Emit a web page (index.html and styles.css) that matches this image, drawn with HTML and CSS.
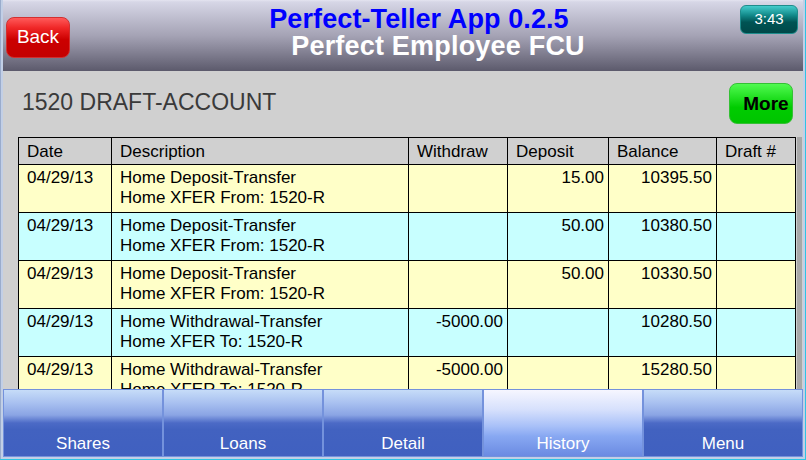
FILE: index.html
```html
<!DOCTYPE html>
<html>
<head>
<meta charset="utf-8">
<link rel="stylesheet" href="styles.css">
</head>
<body>
<div class="frame">
  <div class="window">
    <header class="header">
      <button class="back-btn">Back</button>
      <div class="titles">
        <div class="title-app">Perfect-Teller App 0.2.5</div>
        <div class="title-org">Perfect Employee FCU</div>
      </div>
      <div class="clock">3:43</div>
    </header>
    <main class="content">
      <div class="toolbar">
        <div class="acct-title">1520 DRAFT-ACCOUNT</div>
        <button class="more-btn">More</button>
      </div>
      <div class="table-area">
        <table class="history">
          <thead>
            <tr>
              <th class="c-date">Date</th>
              <th class="c-desc">Description</th>
              <th class="c-wd">Withdraw</th>
              <th class="c-dep">Deposit</th>
              <th class="c-bal">Balance</th>
              <th class="c-draft">Draft #</th>
            </tr>
          </thead>
          <tbody>
            <tr class="yellow">
              <td>04/29/13</td>
              <td>Home Deposit-Transfer<br>Home XFER From: 1520-R</td>
              <td class="num"></td>
              <td class="num">15.00</td>
              <td class="num">10395.50</td>
              <td></td>
            </tr>
            <tr class="cyan">
              <td>04/29/13</td>
              <td>Home Deposit-Transfer<br>Home XFER From: 1520-R</td>
              <td class="num"></td>
              <td class="num">50.00</td>
              <td class="num">10380.50</td>
              <td></td>
            </tr>
            <tr class="yellow">
              <td>04/29/13</td>
              <td>Home Deposit-Transfer<br>Home XFER From: 1520-R</td>
              <td class="num"></td>
              <td class="num">50.00</td>
              <td class="num">10330.50</td>
              <td></td>
            </tr>
            <tr class="cyan">
              <td>04/29/13</td>
              <td>Home Withdrawal-Transfer<br>Home XFER To: 1520-R</td>
              <td class="num">-5000.00</td>
              <td class="num"></td>
              <td class="num">10280.50</td>
              <td></td>
            </tr>
            <tr class="yellow">
              <td>04/29/13</td>
              <td>Home Withdrawal-Transfer<br>Home XFER To: 1520-R</td>
              <td class="num">-5000.00</td>
              <td class="num"></td>
              <td class="num">15280.50</td>
              <td></td>
            </tr>
          </tbody>
        </table>
        <div class="scrollbar"></div>
      </div>
    </main>
    <nav class="tabs">
      <div class="tab">Shares</div>
      <div class="tab">Loans</div>
      <div class="tab">Detail</div>
      <div class="tab active">History</div>
      <div class="tab">Menu</div>
    </nav>
  </div>
</div>
</body>
</html>
```
FILE: styles.css
```css
* { box-sizing: border-box; }
html, body {
  margin: 0;
  padding: 0;
  width: 806px;
  height: 460px;
  overflow: hidden;
  font-family: "Liberation Sans", Arial, sans-serif;
}
.frame {
  width: 806px;
  height: 460px;
  background: #c2cfe6;
  padding: 0 2px 2px 3px;
  border-right: 1px solid #2ec4e4;
  border-bottom: 1px solid #2ec4e4;
  box-shadow: inset 1px 0 0 #9aaccc;
}
.window {
  width: 800px;
  height: 457px;
  display: flex;
  flex-direction: column;
  background: #d0d0d0;
}
.header {
  height: 71px;
  flex: none;
  display: flex;
  align-items: flex-start;
  background: linear-gradient(to bottom, #e4e4f0 0px, #d6d6e6 2px, #a4a2b4 36px, #5c5a6c 71px);
}
.back-btn {
  margin: 17px 0 0 3px;
  width: 64px;
  height: 41px;
  border: 1px solid #d23030;
  border-radius: 8px;
  background: linear-gradient(to bottom, #ff5a5a 0%, #f02828 25%, #cc0000 55%, #c40000 100%);
  color: #fff;
  font-family: "Liberation Sans", Arial, sans-serif;
  font-size: 19px;
  padding: 0 0 2px 0;
  line-height: 20px;
}
.titles {
  flex: 1;
  padding-top: 6px;
  font-weight: bold;
  font-size: 27px;
  line-height: 27px;
  text-align: center;
  letter-spacing: 0.1px;
}
.title-app {
  color: #0000ff;
  padding-left: 28px;
}
.title-org {
  color: #ffffff;
  padding-left: 66px;
  letter-spacing: 0.2px;
}
.clock {
  margin: 5px 5px 0 0;
  width: 58px;
  height: 29px;
  border: 1px solid #1e8c8c;
  border-radius: 6px;
  background: linear-gradient(to bottom, #44cccc 0%, #118888 35%, #005454 60%, #004848 100%);
  color: #fff;
  font-size: 15px;
  line-height: 26px;
  text-align: center;
}
.content {
  flex: 1;
  min-height: 0;
  overflow: hidden;
  padding: 12px 0 0 15px;
  display: flex;
  flex-direction: column;
}
.toolbar {
  display: flex;
  align-items: flex-start;
  justify-content: space-between;
  height: 41px;
  margin-right: 10px;
  flex: none;
}
.acct-title {
  margin-top: 6px;
  margin-left: 4px;
  font-size: 23px;
  line-height: 26px;
  color: #3a3a3a;
}
.more-btn {
  width: 64px;
  height: 41px;
  border: 1px solid #34c034;
  border-radius: 8px;
  background: linear-gradient(to bottom, #50fa50 0%, #22e022 35%, #00cc00 60%, #00c400 100%);
  color: #000;
  font-family: "Liberation Sans", Arial, sans-serif;
  font-weight: bold;
  font-size: 19px;
  padding: 0 0 0 10px;
  line-height: 20px;
}
.table-area {
  margin-top: 13px;
  display: flex;
  align-items: stretch;
  flex: 1;
  min-height: 0;
}
.history {
  border-collapse: separate;
  border-spacing: 0;
  table-layout: fixed;
  width: 778px;
  border-left: 1px solid #000;
  border-top: 1px solid #000;
  font-size: 17px;
  line-height: 20px;
  color: #000;
  align-self: flex-start;
}
.history th, .history td {
  border-right: 1px solid #000;
  border-bottom: 1px solid #000;
  padding: 3px 4px 3px 8px;
  text-align: left;
  vertical-align: top;
  font-weight: normal;
  white-space: nowrap;
  overflow: hidden;
}
.history th { padding-top: 4px; padding-bottom: 2px; background: #d0d0d0; }
.history td { padding-bottom: 4px; }
.c-date { width: 93px; }
.c-desc { width: 297px; }
.c-wd { width: 99px; }
.c-dep { width: 101px; }
.c-bal { width: 108px; }
.c-draft { width: 79px; }
.history td.num { text-align: right; padding-right: 4px; }
.yellow td { background: #ffffc8; }
.cyan td { background: #c8ffff; }
.scrollbar {
  width: 5px;
  margin-left: 1px;
  background: #a8a8a8;
}
.tabs {
  height: 68px;
  flex: none;
  display: flex;
}
.tab {
  width: 160px;
  height: 68px;
  border: 1px solid #7492dc;
  background: linear-gradient(to bottom, #c6dcf8 0%, #a8c0f0 20%, #8aa4e4 38%, #4c6ac6 50%, #4262c0 60%, #4060c0 100%);
  color: #fff;
  font-size: 17px;
  line-height: 20px;
  text-align: center;
  display: flex;
  flex-direction: column;
  justify-content: flex-end;
  padding-bottom: 2px;
}
.tab.active {
  background: linear-gradient(to bottom, #f6f6ff 0%, #d6e0fc 30%, #a8c0f8 55%, #88a8f2 70%, #6a8ae2 100%);
}
```
